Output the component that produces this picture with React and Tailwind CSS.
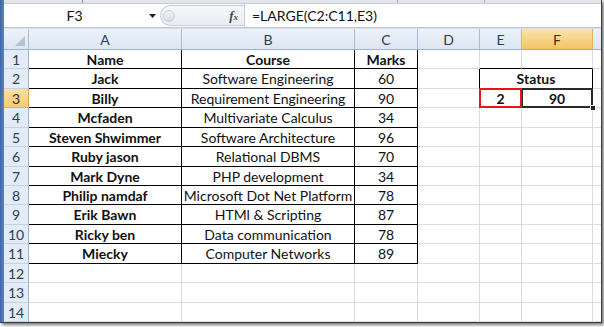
import React from 'react'

const font = { fontFamily: 'Lato, "Open Sans", sans-serif' }

const cols = [
  { key: 'A', w: 'w-[153px]' },
  { key: 'B', w: 'w-[173px]' },
  { key: 'C', w: 'w-[63px]' },
  { key: 'D', w: 'w-[62px]' },
  { key: 'E', w: 'w-[42px]' },
  { key: 'F', w: 'w-[71px]' },
]

const heights = [
  'h-[19px]', 'h-[20px]', 'h-[19px]', 'h-[20px]', 'h-[19px]', 'h-[20px]', 'h-[19px]',
  'h-[19px]', 'h-[20px]', 'h-[19px]', 'h-[20px]', 'h-[19px]', 'h-[20px]', 'h-[19px]',
]

const data = [
  ['Name', 'Course', 'Marks'],
  ['Jack', 'Software Engineering', '60'],
  ['Billy', 'Requirement Engineering', '90'],
  ['Mcfaden', 'Multivariate Calculus', '34'],
  ['Steven Shwimmer', 'Software Architecture', '96'],
  ['Ruby jason', 'Relational DBMS', '70'],
  ['Mark Dyne', 'PHP development', '34'],
  ['Philip namdaf', 'Microsoft Dot Net Platform', '78'],
  ['Erik Bawn', 'HTMl & Scripting', '87'],
  ['Ricky ben', 'Data communication', '78'],
  ['Miecky', 'Computer Networks', '89'],
]

const Cell = ({ w, h, r = 'border-r-[#dadcdd]', b = 'border-b-[#dadcdd]', className = '', children }) => (
  <div className={`${w} ${h} shrink-0 flex items-center justify-center border-r border-b ${r} ${b} text-[14px] text-[#111] ${className}`}>
    {children}
  </div>
)

const ColHead = ({ label, w, active }) => (
  <div
    className={`${w} h-full shrink-0 flex items-center justify-center border-r border-b text-[14px] ${
      active
        ? 'bg-gradient-to-b from-[#fbe4ab] to-[#f3c463] border-r-[#e0b25a] border-b-[#d9a444] text-[#3b2f1a]'
        : 'bg-gradient-to-b from-[#edf2f9] to-[#dce6f3] border-r-[#a8bcd4] border-b-[#9eb3cc] text-[#2c3e57]'
    }`}
  >
    {label}
  </div>
)

const RowHead = ({ n, h, active }) => (
  <div
    className={`w-[25px] ${h} shrink-0 flex items-center justify-center border-r border-b text-[14px] ${
      active
        ? 'bg-gradient-to-b from-[#fbe1a2] to-[#f5cb72] border-r-[#d9a444] border-b-[#e0b25a] text-[#3b2f1a]'
        : 'bg-[#e3ebf6] border-r-[#9eb3cc] border-b-[#c5d3e4] text-[#2c3e57]'
    }`}
  >
    {n}
  </div>
)

const GridRow = ({ idx }) => {
  const r = idx + 1
  const h = heights[idx]
  const row = data[idx]
  const inTable = !!row
  const tb = inTable ? 'border-r-black' : undefined
  const bb = inTable ? 'border-b-black' : undefined
  const bold = r === 1 ? 'font-bold' : ''

  return (
    <div className="flex">
      <RowHead n={r} h={h} active={r === 3} />
      <Cell w="w-[153px]" h={h} r={tb} b={bb} className="font-bold">{row?.[0]}</Cell>
      <Cell w="w-[173px]" h={h} r={tb} b={bb} className={bold}>{row?.[1]}</Cell>
      <Cell w="w-[63px]" h={h} r={tb} b={bb} className={bold}>{row?.[2]}</Cell>
      <Cell w="w-[62px]" h={h} r={r === 2 ? 'border-r-black' : undefined} />
      {r === 2 ? (
        <Cell w="w-[113px]" h={h} r="border-r-black" b="border-b-black" className="font-bold">Status</Cell>
      ) : r === 3 ? (
        <>
          <Cell w="w-[42px]" h={h} className="relative font-bold">
            <div className="absolute -top-px -left-px right-[-1px] bottom-[-1px] border-2 border-[#e8141c] z-10" />
            2
          </Cell>
          <Cell w="w-[71px]" h={h} className="relative font-bold">
            <div className="absolute -top-px -left-px right-[-1px] bottom-[-1px] border-2 border-[#2a2a2a]" />
            <div className="absolute -bottom-[4px] -right-[4px] w-[6px] h-[6px] bg-[#222] border border-white z-20" />
            90
          </Cell>
        </>
      ) : (
        <>
          <Cell w="w-[42px]" h={h} b={r === 1 ? 'border-b-black' : undefined} />
          <Cell w="w-[71px]" h={h} b={r === 1 ? 'border-b-black' : undefined} />
        </>
      )}
      <div className={`flex-1 ${h} border-b border-b-[#dadcdd]`} />
    </div>
  )
}

export default function App() {
  return (
    <div className="w-[604px] h-[327px] bg-white overflow-hidden" style={font}>
      <div className="w-[602px] h-[323px] flex border-r border-b border-[#3c3c3c] shadow-[2px_2px_3px_rgba(0,0,0,0.55)]">
        {/* window frame */}
        <div className="w-[4px] h-full shrink-0 bg-gradient-to-r from-[#3e67a2] to-[#5a86c2]" />

        <div className="flex-1 flex flex-col min-w-0">
          {/* ribbon edge */}
          <div className="h-[4px] flex bg-[#e2e6eb] border-b border-[#c3cad4]">
            <div className="w-[79px] border-r border-[#8d98a6]" />
            <div className="w-[315px] border-r border-[#aab3bf]" />
            <div className="w-[87px] border-r border-[#aab3bf]" />
            <div className="flex-1" />
          </div>

          {/* formula bar */}
          <div className="h-[23px] flex items-center bg-white">
            <div className="w-[141px] h-full flex items-center justify-center text-[14px] text-[#111]">F3</div>
            <div className="w-[15px] h-full flex items-center justify-center">
              <svg width="7" height="4" viewBox="0 0 7 4"><path d="M0 0h7L3.5 4z" fill="#222" /></svg>
            </div>
            <div className="w-[84px] h-[21px] flex items-center rounded-l-full border border-r-0 border-[#c4ccd6] bg-gradient-to-b from-[#f6f8fa] to-[#e9edf2]">
              <div className="ml-[2px] w-[12px] h-[12px] rounded-full border border-[#c9cfd8] bg-gradient-to-b from-[#f3f4f6] to-[#d8dde4]" />
              <span className="ml-auto mr-[6px] text-[13px] italic font-bold text-[#3f4a59]" style={{ fontFamily: '"Liberation Serif", serif' }}>
                f<span className="text-[9px]">x</span>
              </span>
            </div>
            <div className="flex-1 h-full flex items-center pl-[7px] border-l border-[#c4ccd6] text-[14px] text-[#111]">
              =LARGE(C2:C11,E3)
            </div>
          </div>

          <div className="h-[2px] bg-[#d6dde7] border-t border-[#bfc9d6]" />

          {/* column headers */}
          <div className="h-[21px] flex">
            <div className="w-[25px] h-full shrink-0 relative bg-gradient-to-b from-[#edf2f9] to-[#dce6f3] border-r border-b border-r-[#a8bcd4] border-b-[#9eb3cc]">
              <svg className="absolute right-[3px] bottom-[3px]" width="10" height="10" viewBox="0 0 10 10">
                <path d="M10 0V10H0z" fill="#b4c2d3" />
              </svg>
            </div>
            {cols.map((c) => (
              <ColHead key={c.key} label={c.key} w={c.w} active={c.key === 'F'} />
            ))}
            <div className="flex-1 h-full bg-gradient-to-b from-[#edf2f9] to-[#dce6f3] border-b border-[#9eb3cc]" />
          </div>

          {/* rows */}
          <div className="flex flex-col">
            {heights.map((_, i) => (
              <GridRow key={i} idx={i} />
            ))}
          </div>
        </div>
      </div>
    </div>
  )
}
